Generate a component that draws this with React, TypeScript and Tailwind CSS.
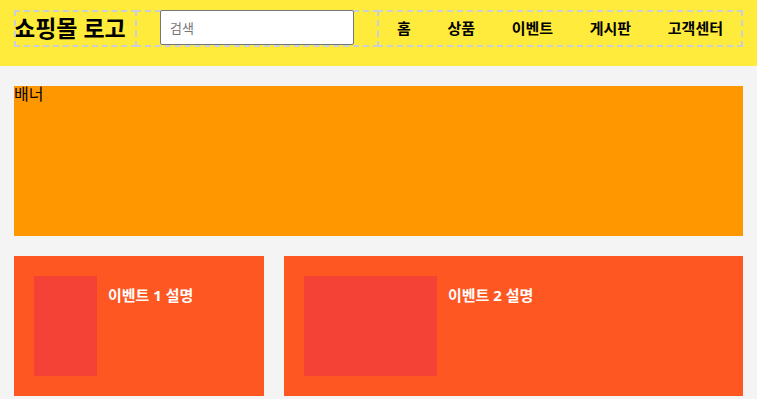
const navItems = ['홈', '상품', '이벤트', '게시판', '고객센터'];

const events = [
  { id: 1, label: '이벤트 1 설명', card: 'w-[250px]', img: 'w-[63px]' },
  { id: 2, label: '이벤트 2 설명', card: 'flex-1', img: 'w-[133px]' },
];

export default function App() {
  return (
    <div className="min-h-[399px] bg-[#f4f4f4] font-['Noto_Sans','Noto_Sans_CJK_KR',sans-serif] text-black">
      {/* Header */}
      <header className="bg-[#ffeb3b] px-[14px] pt-[10px] pb-[19px]">
        <div className="flex h-[37px] items-stretch">
          <div className="flex w-[123px] items-center outline-2 -outline-offset-2 outline-dashed outline-[#c9cfd9]">
            <h1 className="text-[23px] font-bold leading-none">쇼핑몰 로고</h1>
          </div>
          <div className="-ml-[2px] flex-1 pl-[25px] outline-2 -outline-offset-2 outline-dashed outline-[#c9cfd9]">
            <input
              type="text"
              placeholder="검색"
              className="relative h-[35px] w-[194px] rounded-[2px] border border-[#767676] bg-white px-[9px] text-[13px] placeholder:text-[#757575] focus:outline-none"
            />
          </div>
          <nav className="-ml-[2px] flex w-[366px] items-center justify-between px-[20px] outline-2 -outline-offset-2 outline-dashed outline-[#c9cfd9]">
            {navItems.map((item) => (
              <a key={item} href="#" className="text-[15px] font-bold leading-none">
                {item}
              </a>
            ))}
          </nav>
        </div>
      </header>

      {/* Main */}
      <main className="flex flex-col gap-[20px] px-[14px] pt-[20px]">
        <section className="h-[150px] bg-[#ff9800] text-base leading-[17px]">배너</section>

        <section className="flex gap-[20px]">
          {events.map((e) => (
            <div key={e.id} className={`${e.card} flex h-[140px] items-start gap-[11px] bg-[#ff5722] p-[20px]`}>
              <div className={`${e.img} h-[100px] bg-[#f44336]`} />
              <h3 className="mt-[9px] text-[15px] font-bold leading-[20px] text-white">{e.label}</h3>
            </div>
          ))}
        </section>
      </main>
    </div>
  );
}
